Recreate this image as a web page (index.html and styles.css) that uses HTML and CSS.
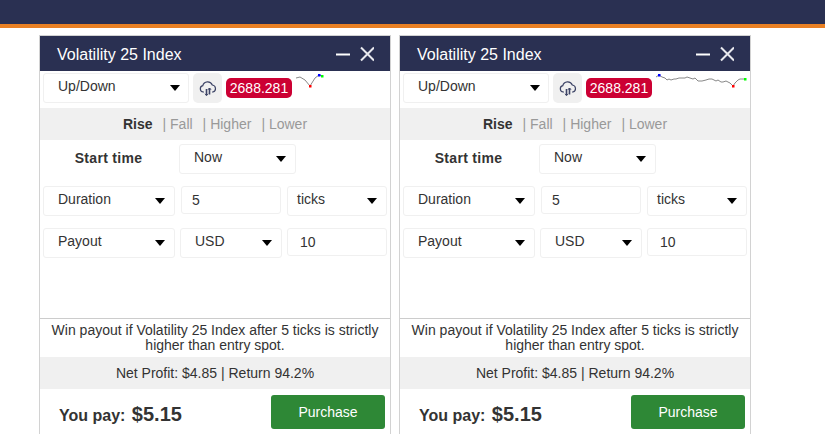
FILE: index.html
```html
<!DOCTYPE html>
<html lang="en">
<head>
    <meta charset="UTF-8">
    <meta name="viewport" content="width=device-width, initial-scale=1.0">
    <title>Volatility 25 Index</title>
    <link rel="stylesheet" href="styles.css">
</head>
<body>
    <div class="topbar"></div>

    <div class="desktop">
        <div class="window">
            <div class="title">
                <span class="title-text">Volatility 25 Index</span>
                <svg class="title-icon" width="38" height="16" viewBox="0 0 38 16">
                    <path d="M0 8.5H14" stroke="#fff" stroke-width="2"/>
                    <path d="M25 1.5L38 14.5M38 1.5L25 14.5" stroke="#e8e9ee" stroke-width="2"/>
                </svg>
            </div>
            <div class="top-row">
                <div class="select type-select"><span>Up/Down</span><i class="arrow"></i></div>
                <div class="cloud-btn">
                    <svg width="18" height="18" viewBox="0 0 18 18" fill="none" stroke="#3d4466" stroke-width="1.2">
                        <path d="M5 13H4.2A3.2 3.2 0 0 1 3.8 6.7 5 5 0 0 1 13.3 6 3.6 3.6 0 0 1 14 13H13"/>
                        <path d="M7.5 10V16.5M10.5 9V15.5" stroke-width="1.6"/>
                        <path d="M6 14.8L7.5 16.5 9 14.8M9 10.8L10.5 9 12 10.8" stroke-width="1"/>
                    </svg>
                </div>
                <div class="price">2688.281</div>
                <svg class="spark" width="30" height="20" viewBox="0 0 30 20" fill="none">
                    <path d="M0 5L4 4 9 7 14 13 19 5 23 2 26 3" stroke="#888"/>
                    <rect x="13" y="12" width="2.5" height="2.5" fill="#f00"/>
                    <rect x="22" y="1" width="2.5" height="2.5" fill="#00f"/>
                    <rect x="25" y="2" width="2.5" height="2.5" fill="#0f0"/>
                </svg>
            </div>
            <div class="tabs">
                <span class="tab active">Rise</span>
                <span class="tab">|&nbsp;Fall</span>
                <span class="tab">|&nbsp;Higher</span>
                <span class="tab">|&nbsp;Lower</span>
            </div>
            <div class="row start-row">
                <span class="start-label">Start time</span>
                <div class="select now-select"><span>Now</span><i class="arrow"></i></div>
            </div>
            <div class="row">
                <div class="select basis-select"><span>Duration</span><i class="arrow"></i></div>
                <div class="input amount-input">5</div>
                <div class="select unit-select"><span>ticks</span><i class="arrow"></i></div>
            </div>
            <div class="row">
                <div class="select basis-select"><span>Payout</span><i class="arrow"></i></div>
                <div class="select currency-select"><span>USD</span><i class="arrow"></i></div>
                <div class="input value-input">10</div>
            </div>
            <div class="spacer"></div>
            <p class="desc">Win payout if Volatility 25 Index after 5 ticks is strictly higher than entry spot.</p>
            <div class="profit">Net Profit: $4.85 | Return 94.2%</div>
            <div class="footer">
                <div class="pay">You pay: <b>$5.15</b></div>
                <button class="purchase">Purchase</button>
            </div>
        </div>

        <div class="window">
            <div class="title">
                <span class="title-text">Volatility 25 Index</span>
                <svg class="title-icon" width="38" height="16" viewBox="0 0 38 16">
                    <path d="M0 8.5H14" stroke="#fff" stroke-width="2"/>
                    <path d="M25 1.5L38 14.5M38 1.5L25 14.5" stroke="#e8e9ee" stroke-width="2"/>
                </svg>
            </div>
            <div class="top-row">
                <div class="select type-select"><span>Up/Down</span><i class="arrow"></i></div>
                <div class="cloud-btn">
                    <svg width="18" height="18" viewBox="0 0 18 18" fill="none" stroke="#3d4466" stroke-width="1.2">
                        <path d="M5 13H4.2A3.2 3.2 0 0 1 3.8 6.7 5 5 0 0 1 13.3 6 3.6 3.6 0 0 1 14 13H13"/>
                        <path d="M7.5 10V16.5M10.5 9V15.5" stroke-width="1.6"/>
                        <path d="M6 14.8L7.5 16.5 9 14.8M9 10.8L10.5 9 12 10.8" stroke-width="1"/>
                    </svg>
                </div>
                <div class="price">2688.281</div>
                <svg class="spark" width="91" height="20" viewBox="0 0 91 20" fill="none">
                    <path d="M0 4L3 2 6 4 9 5 11 7 13 6 15 7 18 6 20 6 23 5 26 5 29 5 31 4 34 5 37 6 39 5 42 8 46 8 50 7 53 6 56 6 58 7 60 8 62 7 65 9 67 9 70 8 72 9 74 10 77 13 79 10 82 7 84 6 89 6" stroke="#888"/>
                    <rect x="76" y="12" width="2.5" height="2.5" fill="#f00"/>
                    <rect x="2" y="1" width="2.5" height="2.5" fill="#00f"/>
                    <rect x="88" y="5" width="2.5" height="2.5" fill="#0f0"/>
                </svg>
            </div>
            <div class="tabs">
                <span class="tab active">Rise</span>
                <span class="tab">|&nbsp;Fall</span>
                <span class="tab">|&nbsp;Higher</span>
                <span class="tab">|&nbsp;Lower</span>
            </div>
            <div class="row start-row">
                <span class="start-label">Start time</span>
                <div class="select now-select"><span>Now</span><i class="arrow"></i></div>
            </div>
            <div class="row">
                <div class="select basis-select"><span>Duration</span><i class="arrow"></i></div>
                <div class="input amount-input">5</div>
                <div class="select unit-select"><span>ticks</span><i class="arrow"></i></div>
            </div>
            <div class="row">
                <div class="select basis-select"><span>Payout</span><i class="arrow"></i></div>
                <div class="select currency-select"><span>USD</span><i class="arrow"></i></div>
                <div class="input value-input">10</div>
            </div>
            <div class="spacer"></div>
            <p class="desc">Win payout if Volatility 25 Index after 5 ticks is strictly higher than entry spot.</p>
            <div class="profit">Net Profit: $4.85 | Return 94.2%</div>
            <div class="footer">
                <div class="pay">You pay: <b>$5.15</b></div>
                <button class="purchase">Purchase</button>
            </div>
        </div>
    </div>
</body>
</html>
```

FILE: styles.css
```css
html, body {
    height: 100%;
}

body {
    margin: 0;
    overflow: hidden;
    font-family: "Liberation Sans", Arial, sans-serif;
    font-size: 14px;
    color: #333;
    background-color: #fff;
}

.topbar {
    height: 24px;
    background-color: #2a3052;
    border-bottom: 4px solid #e98024;
}

.desktop {
    display: flex;
    gap: 8px;
    padding: 7px 0 0 39px;
}

.window {
    display: flex;
    flex-direction: column;
    flex: none;
    width: 350px;
    height: 410px;
    border: 1px solid #d2d2d2;
    border-bottom: none;
}

.title {
    display: flex;
    justify-content: space-between;
    align-items: center;
    flex: none;
    height: 35px;
    padding: 0 16px 0 17px;
    color: #fff;
    font-size: 16px;
    background-color: #2a3052;
}

.title-text {
    padding-top: 2px;
}

.title-icon {
    display: block;
}

.top-row {
    display: flex;
    align-items: flex-start;
    height: 37px;
    padding: 2px 0 0 3px;
    box-sizing: border-box;
}

.select, .input {
    display: flex;
    box-sizing: border-box;
    flex: none;
    border: 1px solid #f0f0f0;
    border-radius: 3px;
    background-color: #fff;
}

.select {
    justify-content: space-between;
    align-items: flex-start;
    height: 30px;
    padding: 4px 9px 0 14px;
}

.input {
    align-items: center;
    height: 28px;
    padding: 0 10px;
}

.arrow {
    width: 0;
    height: 0;
    margin-top: 7px;
    border-left: 5px solid transparent;
    border-right: 5px solid transparent;
    border-top: 6px solid #000;
}

.type-select {
    width: 146px;
    margin-right: 4px;
    padding-right: 8px;
}

.cloud-btn {
    display: flex;
    justify-content: center;
    align-items: center;
    width: 29px;
    height: 30px;
    margin-right: 4px;
    border-radius: 5px;
    background-color: #f0f0f0;
}

.price {
    width: 66px;
    height: 20px;
    margin-top: 5px;
    border-radius: 5px;
    color: #fff;
    line-height: 20px;
    text-align: center;
    background-color: #cc0033;
}

.spark {
    margin-left: 4px;
}

.tabs {
    display: flex;
    justify-content: center;
    gap: 10px;
    height: 32px;
    line-height: 32px;
    color: #999;
    background-color: #f0f0f0;
}

.tab.active {
    font-weight: bold;
    color: #333;
}

.row {
    display: flex;
    gap: 6px;
    height: 30px;
    margin-top: 12px;
    padding-left: 3px;
}

.start-row {
    gap: 0;
    margin-top: 4px;
}

.start-label {
    width: 131px;
    margin-right: 5px;
    padding-top: 6px;
    font-weight: bold;
    letter-spacing: 0.3px;
    text-align: center;
}

.now-select {
    width: 117px;
}

.basis-select {
    width: 132px;
}

.amount-input {
    width: 100px;
}

.unit-select {
    width: 100px;
    padding-left: 9px;
}

.currency-select {
    width: 102px;
    margin-left: -1px;
}

.value-input {
    width: 100px;
    margin-left: -1px;
    padding-left: 12px;
}

.spacer {
    flex: 1;
}

.desc {
    margin: 0;
    padding: 4px 8px;
    border-top: 1px solid #ccc;
    line-height: 15px;
    text-align: center;
}

.profit {
    height: 32px;
    line-height: 32px;
    text-align: center;
    background-color: #f0f0f0;
}

.footer {
    display: flex;
    justify-content: space-between;
    align-items: flex-start;
    flex: none;
    height: 45px;
    margin-bottom: 6px;
    padding: 6px 5px 0 19px;
}

.pay {
    padding-top: 8px;
    font-size: 16px;
    font-weight: bold;
}

.pay b {
    margin-left: 2px;
    font-size: 20px;
}

.purchase {
    width: 114px;
    height: 34px;
    border: none;
    border-radius: 3px;
    color: #fff;
    font-family: inherit;
    font-size: 14px;
    background-color: #2e8836;
}
```
